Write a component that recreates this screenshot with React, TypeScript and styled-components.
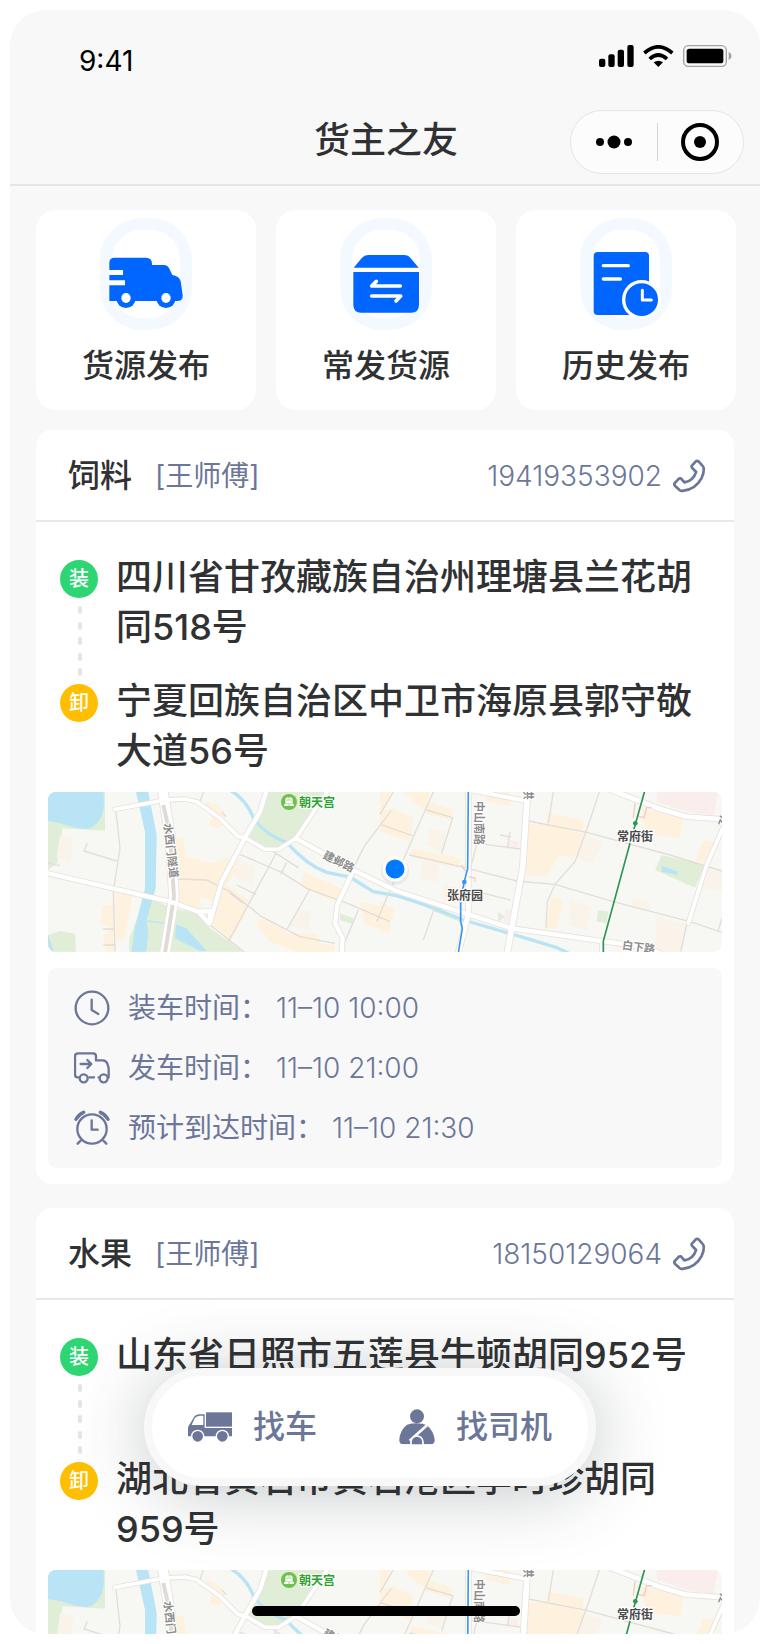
import React from 'react';
import styled, { createGlobalStyle } from 'styled-components';

const color = {
  ink: '#303133',
  muted: '#6c7698',
  page: '#f8f8f8',
  line: '#e8e8e9',
  blue: '#0066ff',
};

const GlobalStyle = createGlobalStyle`
  *, *::before, *::after { box-sizing: border-box; }
  body {
    margin: 0;
    background: #fff;
    color: ${color.ink};
    font-family: Inter, "Noto Sans CJK SC", sans-serif;
  }
  h1, h2, p, ul, ol, dl, dt, dd { margin: 0; padding: 0; list-style: none; }
  button { font-family: inherit; color: inherit; border: 0; background: none; padding: 0; cursor: pointer; }
  a { color: inherit; text-decoration: none; }
  svg { display: block; flex: none; }
`;

const Page = styled.div`
  padding: 10px;
`;

const Phone = styled.div`
  position: relative;
  display: flex;
  flex-direction: column;
  height: calc(100vh - 20px);
  overflow: hidden;
  border-radius: 36px;
  background: ${color.page};
`;

const TopBar = styled.header`
  flex: none;
  border-bottom: 2px solid #e6e6e6;
`;

const StatusBar = styled.div`
  display: flex;
  align-items: center;
  justify-content: space-between;
  height: 90px;
  padding: 12px 28px 0 69px;
  color: #000;
  font-size: 28px;
  line-height: 36px;
`;

const StatusIcons = styled.div`
  display: flex;
  align-items: center;
  gap: 9px;
  padding-bottom: 10px;
`;

const NavBar = styled.div`
  display: grid;
  grid-template-columns: 1fr auto 1fr;
  align-items: center;
  height: 84px;
  padding: 0 16px;
`;

const NavTitle = styled.h1`
  grid-column: 2;
  padding: 0 0 4px 2px;
  font-size: 36px;
  line-height: 50px;
  font-weight: 500;
`;

const Capsule = styled.div`
  justify-self: end;
  display: flex;
  align-items: center;
  width: 174px;
  height: 64px;
  border: 1px solid #e6e6e6;
  border-radius: 32px;
  background: #fcfcfc;
`;

const CapsuleButton = styled.button`
  flex: 1;
  display: flex;
  justify-content: center;
  & + & {
    border-left: 1px solid #d4d4d4;
  }
`;

const Content = styled.main`
  flex: 1;
  min-height: 0;
  overflow-y: auto;
  scrollbar-width: none;
  padding: 24px 26px 0;
`;

const QuickGrid = styled.nav`
  display: grid;
  grid-template-columns: repeat(3, 1fr);
  gap: 20px;
  margin: 0 -2px 20px 0;
`;

const QuickButton = styled.button`
  display: flex;
  flex-direction: column;
  align-items: center;
  gap: 14px;
  height: 200px;
  padding-top: 8px;
  border-radius: 20px;
  background: #fff;
  font-size: 32px;
  line-height: 44px;
  font-weight: 500;
`;

const OrderCard = styled.article`
  margin-bottom: 24px;
  padding-bottom: 16px;
  border-radius: 16px;
  background: #fff;
`;

const OrderHeader = styled.header`
  display: flex;
  align-items: center;
  height: 92px;
  padding: 2px 28px 0 32px;
  border-bottom: 2px solid ${color.line};
`;

const Goods = styled.h2`
  font-size: 32px;
  line-height: 44px;
  font-weight: 500;
`;

const Driver = styled.span`
  margin-left: 23px;
  color: ${color.muted};
  font-size: 28px;
  line-height: 40px;
`;

const PhoneLink = styled.a`
  display: flex;
  align-items: center;
  gap: 10px;
  margin-left: auto;
  color: ${color.muted};
  font-size: 28px;
  line-height: 40px;
  font-weight: 300;
`;

const Route = styled.ol`
  padding: 30px 24px 16px;
`;

const Stop = styled.li`
  display: flex;
  gap: 18px;
  min-height: 100px;
  &:first-child {
    min-height: 124px;
  }
`;

const StopRail = styled.div`
  display: flex;
  flex-direction: column;
  align-items: center;
  width: 38px;
  padding-top: 8px;
`;

const StopBadge = styled.span<{ $tone: string }>`
  flex: none;
  width: 38px;
  height: 38px;
  border-radius: 50%;
  background: ${(p) => p.$tone};
  color: #fff;
  font-size: 20px;
  line-height: 38px;
  font-weight: 500;
  text-align: center;
`;

const Dashes = styled.div`
  flex: 1;
  display: flex;
  flex-direction: column;
  justify-content: space-between;
  padding: 8px 0 0 2px;
`;

const Dash = styled.i`
  width: 4px;
  height: 8px;
  border-radius: 2px;
  background: #e4e5e8;
`;

const Address = styled.p`
  flex: 1;
  font-size: 36px;
  line-height: 50px;
  font-weight: 500;
`;

const MapFrame = styled.div`
  margin: 0 12px 16px;
  height: 160px;
  border-radius: 8px;
  overflow: hidden;
  svg {
    width: 100%;
    height: 100%;
  }
`;

const Times = styled.dl`
  margin: 0 12px;
  padding: 10px 26px;
  border-radius: 8px;
  background: ${color.page};
`;

const TimeRow = styled.div`
  display: flex;
  align-items: center;
  height: 60px;
  color: ${color.muted};
  font-size: 28px;
  line-height: 40px;
  dt {
    margin-left: 18px;
  }
  dd {
    margin-left: 8px;
    font-weight: 300;
  }
`;

const Dock = styled.div`
  position: absolute;
  left: 134px;
  bottom: 148px;
  display: flex;
  align-items: center;
  gap: 82px;
  width: 452px;
  height: 118px;
  padding: 0 36px;
  border: 8px solid ${color.page};
  border-radius: 59px;
  background: #fff;
  box-shadow: 0 6px 72px rgba(44, 54, 56, 0.28);
`;

const DockButton = styled.button`
  display: flex;
  align-items: center;
  gap: 21px;
  color: ${color.muted};
  font-size: 32px;
  line-height: 44px;
  font-weight: 500;
  white-space: nowrap;
`;

const HomeIndicator = styled.div`
  position: absolute;
  left: 50%;
  bottom: 18px;
  width: 268px;
  height: 10px;
  margin-left: -133px;
  border-radius: 5px;
  background: #000;
`;

/* ---------- Icons ---------- */

const SignalIcon = () => (
  <svg width="35" height="22" viewBox="0 0 105 66" aria-hidden="true">
    <rect x="0" y="41" width="19" height="25" rx="6" />
    <rect x="28" y="28" width="19" height="38" rx="6" />
    <rect x="56" y="14" width="19" height="52" rx="6" />
    <rect x="85" y="0" width="19" height="66" rx="6" />
  </svg>
);

const WifiIcon = () => (
  <svg width="31" height="22" viewBox="0 0 93 66" fill="none" stroke="#000" strokeWidth="11" aria-hidden="true">
    <path d="M4 24 Q46 -13 88 24" />
    <path d="M20 42 Q46 18 72 42" />
    <path d="M46 66 L32 52 Q46 42 60 52 Z" fill="#000" stroke="none" />
  </svg>
);

const BatteryIcon = () => (
  <svg width="49" height="22" viewBox="0 0 147 66" aria-hidden="true">
    <rect x="2" y="2" width="128" height="62" rx="14" fill="none" stroke="#a3a3a3" strokeWidth="4" />
    <rect x="11" y="11" width="110" height="44" rx="8" />
    <path d="M137 20 Q146 25 146 33 Q146 41 137 46Z" fill="#a3a3a3" />
  </svg>
);

const MoreIcon = () => (
  <svg width="38" height="14" viewBox="0 0 38 14" aria-hidden="true">
    <circle cx="5" cy="7" r="4" />
    <circle cx="19" cy="7" r="6.5" />
    <circle cx="33" cy="7" r="4" />
  </svg>
);

const TargetIcon = () => (
  <svg width="38" height="38" viewBox="0 0 38 38" aria-hidden="true">
    <circle cx="19" cy="19" r="17" fill="none" stroke="#000" strokeWidth="4" />
    <circle cx="19" cy="19" r="6" />
  </svg>
);

const QuickIcon = ({ children }: { children: React.ReactNode }) => (
  <svg width="92" height="112" viewBox="0 0 276 336" aria-hidden="true">
    <rect x="18" y="18" width="240" height="300" rx="108" fill="none" stroke="#f4f8ff" strokeWidth="36" />
    {children}
  </svg>
);

const PublishIcon = () => (
  <QuickIcon>
    <path
      fill={color.blue}
      d="M28 135 Q28 119 44 119 H138 Q156 119 156 137 V141 H192 Q202 141 207 150 L217 171 Q237 173 242 190 L248 232 Q249 249 234 249 H28Z"
    />
    <circle cx="78" cy="241" r="29" fill={color.blue} />
    <circle cx="198" cy="241" r="29" fill={color.blue} />
    <g fill="#fff">
      <ellipse cx="78" cy="240" rx="14" ry="15" />
      <ellipse cx="198" cy="240" rx="14" ry="15" />
      <path d="M26 156 H69 V171 H26Z M26 187 H75 V202 H26Z" />
    </g>
  </QuickIcon>
);

const FrequentIcon = () => (
  <QuickIcon>
    <rect x="36" y="146" width="204" height="20" fill="#fff" />
    <path fill={color.blue} d="M41 149 L66 119 Q73 111 84 111 H194 Q205 111 211 119 L236 149Z" />
    <path fill={color.blue} d="M40 162 H237 V260 Q237 284 213 284 H64 Q40 284 40 260Z" />
    <g fill="none" stroke="#fff" strokeWidth="11" strokeLinecap="round" strokeLinejoin="round">
      <path d="M109 190 L95 204 H181" />
      <path d="M95 234 H182 L168 249" />
    </g>
  </QuickIcon>
);

const HistoryIcon = () => (
  <QuickIcon>
    <rect x="41" y="102" width="166" height="189" rx="12" fill={color.blue} />
    <circle cx="185" cy="245" r="59" fill="#fff" />
    <circle cx="185" cy="245" r="49" fill={color.blue} />
    <g fill="none" stroke="#fff" strokeWidth="10" strokeLinecap="round" strokeLinejoin="round">
      <path d="M70 143 H145 M70 183 H121" />
      <path strokeWidth="9" d="M187 217 V246 H214" />
    </g>
  </QuickIcon>
);

const HandsetIcon = () => (
  <svg width="34" height="34" viewBox="0 0 100 100" fill="none" stroke="currentColor" strokeWidth="8" strokeLinejoin="round" aria-hidden="true">
    <path d="M70 7 L58 20 Q56 25 63 30 L71 38 Q63 64 37 69 L26 57 Q22 56 19 59 L8 71 Q5 75 10 80 L23 92 Q27 95 34 93 Q70 88 87 56 Q95 40 93 26 Q92 22 88 18 L78 7 Q74 4 70 7Z" />
  </svg>
);

const TimeIcon = ({ children }: { children: React.ReactNode }) => (
  <svg width="36" height="36" viewBox="0 0 108 108" fill="none" stroke="currentColor" strokeWidth="7" strokeLinecap="round" strokeLinejoin="round" aria-hidden="true">
    {children}
  </svg>
);

const ClockIcon = () => (
  <TimeIcon>
    <circle cx="54" cy="54" r="49" />
    <path d="M53 29 V60 L73 72" />
  </TimeIcon>
);

const DepartIcon = () => (
  <TimeIcon>
    <path d="M15 82 H10 Q3 82 3 73 V19 Q3 10 12 10 H57 Q66 10 66 19 V31 H86 Q96 31 100 41 L104 54 V82 H102" />
    <path d="M46 82 H60 M74 82 H78" />
    <circle cx="29" cy="85" r="12" />
    <circle cx="89" cy="85" r="12" />
    <path d="M20 42 H50 M40 30 L52 42 L40 54" />
  </TimeIcon>
);

const AlarmIcon = () => (
  <TimeIcon>
    <circle cx="54" cy="57" r="44" />
    <path d="M53 31 V59 H71" />
    <path d="M20 92 L11 101 M88 92 L97 101" />
    <path strokeWidth="10" d="M6 28 Q14 13 29 7 M79 7 Q94 13 102 28" />
  </TimeIcon>
);

const LorryIcon = () => (
  <svg width="44" height="30" viewBox="0 0 132 90" aria-hidden="true">
    <path fill="currentColor" d="M54 1 H132 V44 H54Z" />
    <path
      fill="currentColor"
      fillRule="evenodd"
      d="M0 73 V48 Q1 41 7 34 L17 17 Q23 7 36 7 H50 V48 H132 V73Z M11 39 H46 V11 H36 Q25 11 20 19Z"
    />
    <g stroke="#fff" strokeWidth="4" fill="currentColor">
      <circle cx="29" cy="73" r="18" />
      <circle cx="103" cy="73" r="18" />
    </g>
  </svg>
);

const DriverIcon = () => (
  <svg width="36" height="36" viewBox="0 0 108 108" fill="currentColor" aria-hidden="true">
    <circle cx="54" cy="22" r="21" />
    <path d="M1 93 Q2 64 24 47 Q38 43 54 43 Q70 43 84 49 Q104 66 107 93 Q107 106 95 106 H13 Q1 106 1 93Z" />
    <g stroke="#fff" fill="none">
      <path strokeWidth="8" d="M84 49 L32 95" />
      <path strokeWidth="5" fill="currentColor" d="M36 110 V99 A18 18 0 0 1 72 99 V110" />
    </g>
    <path fill="#fff" d="M0 106 H108 V108 H0Z" />
  </svg>
);

/* ---------- Map ---------- */

const MapLabel = styled.text<{ $fill?: string }>`
  font-family: "Noto Sans CJK SC", sans-serif;
  font-size: 12px;
  font-weight: 700;
  fill: ${(p) => p.$fill || '#4a4a4a'};
  stroke: #fff;
  stroke-width: 2px;
  paint-order: stroke;
  text-anchor: middle;
`;

const RoadLabel = styled(MapLabel)`
  font-size: 11px;
  fill: #8c8c8c;
`;

const minorRoads = [
  'M228 80 L240 190 L220 320 L225 500',
  'M142 175 L132 198 L230 228',
  'M24 235 L60 242',
  'M410 282 L500 285 L570 320 L665 395 L780 455 L885 475',
  'M600 208 L725 262 L800 310 L930 358 L1050 410',
  'M708 205 L565 470',
  'M508 418 L612 500',
  'M808 315 L740 435',
  'M955 375 L915 470',
  'M740 232 L722 268',
  'M700 200 L775 248',
  'M570 325 L610 355 M590 300 L648 328',
  'M1054 76 L972 185 L940 250',
  'M190 480 H228 M190 432 H225',
  'M490 21 L480 50 M545 80 L558 95',
  'M1180 21 L1140 110 L1048 320 L1010 410',
  'M1020 118 L1118 152 M1060 21 L1020 88',
  'M1160 75 L1238 98 L1205 205',
  'M1108 210 L1250 242 L1430 288 L1545 298 L1720 350 L1950 410 L2046 442',
  'M1275 170 L1440 192 M1310 178 L1290 255',
  'M1465 108 L1640 142 L1890 210 L2046 258',
  'M1525 115 L1540 21',
  'M1678 21 L1645 120 L1605 230 L1545 298 L1522 350 L1518 430',
  'M1290 315 L1412 345 M1410 140 L1402 190 M1380 150 L1412 156',
  'M1190 350 L1150 465',
  'M1940 420 L1922 500 M2046 400 L2034 438',
];

const majorRoads = [
  { d: 'M24 265 L390 350 L475 380 L508 416 M475 380 L512 378 L508 416', w: 13 },
  { d: 'M225 73 L375 45 L435 42 L470 50 L540 100 L595 155 L615 158 L675 193 L715 193 L768 160 L865 15', w: 11 },
  { d: 'M682 10 L660 80 L615 158 L545 290 L510 412', w: 13 },
  { d: 'M768 160 L940 255 L1070 318 L1285 388 L1415 430 L1685 468 L1780 482 L1860 504', w: 13 },
  { d: 'M940 255 L892 360 L885 415 L908 460 L905 504', w: 13 },
  { d: 'M1285 15 V388 L1255 504', w: 15 },
  { d: 'M1290 15 L1460 48', w: 12 },
  { d: 'M1461 45 L1448 250 L1415 430 L1402 504', w: 17 },
  { d: 'M1700 10 L1860 72 L1940 95 L2050 103', w: 14 },
  { d: 'M2050 125 L2000 240 L1945 415', w: 11 },
  { d: 'M1684 468 V504', w: 8 },
];

const blocks =
  'M500 50 L530 60 L558 90 L540 130 L508 122 L515 85 L498 70Z ' +
  'M408 155 L430 160 L440 215 L520 235 L560 220 L600 240 L560 300 L625 345 L610 400 L570 470 L510 410 L520 350 L480 335 L485 372 L415 350 L420 280 L405 230Z ' +
  'M225 322 L278 330 L270 380 L250 470 L228 460Z M190 360 L225 360 V500 H195 L190 450 L215 430 L178 415Z ' +
  'M795 262 L905 310 L895 350 L855 340 L780 300Z M660 400 L720 420 L740 445 L830 445 L845 475 L885 480 V500 H770 L690 470 L650 420Z ' +
  'M960 350 L1050 370 V440 L975 420Z M1020 21 H1060 L1020 85Z ' +
  'M1020 78 L1060 70 L1120 100 L1110 170 L1020 140Z M1095 21 H1170 L1160 75 L1130 60Z ' +
  'M1165 50 L1240 75 L1230 105 L1155 85Z M1115 190 L1260 220 L1255 250 L1110 215Z ' +
  'M1330 21 H1410 V65 L1340 50Z M1465 115 L1540 120 L1640 150 L1600 220 L1560 210 L1520 275 L1440 270 L1450 180Z ' +
  'M1520 85 L1630 105 V140 L1520 115Z M1535 335 L1570 345 L1550 430 L1515 430Z ' +
  'M1020 350 L1065 370 L1045 440 H1020Z M1800 70 L1930 95 L1920 160 L1820 150Z M1990 165 L2030 175 L2000 235 L1965 230Z M1210 300 L1265 310 V355 L1215 350Z';

const paleBlocks =
  'M60 150 L100 160 L90 230 L50 220Z M590 220 L645 245 L640 300 L585 280Z M765 370 L815 380 L805 435 L755 425Z ' +
  'M1145 220 L1200 235 L1190 290 L1140 280Z M1630 150 L1690 170 L1660 235 L1610 220Z M1590 345 L1655 365 L1640 435 L1585 420Z ' +
  'M1850 395 L1940 420 L1920 500 H1845Z M1990 250 L2046 262 V318 L1980 310Z M1170 130 L1220 140 L1210 200 L1160 180Z M1780 340 L1830 350 V375 L1775 360Z';

const RouteMap = () => (
  <svg viewBox="0 0 674 160" preserveAspectRatio="xMidYMid slice" role="img" aria-label="地图">
    <rect width="674" height="160" fill="#f7f8f3" />
    <g transform="translate(-8 -7) scale(0.33333)" fill="none">
      <path fill="#e0eed8" d="M24 21 H195 V137 L68 130 L52 235 L24 255Z M24 450 L60 437 L107 447 V500 H24Z M340 345 L400 370 L470 385 L510 430 L612 500 H268 V460 L300 380Z M680 21 H865 L765 165 L715 192 H680 L622 158Z" />
      <path fill="#e0eed8" d="M1865 210 L1995 240 L1965 308 L1845 255Z M1675 375 L1705 380 L1700 415 L1670 410Z M1375 380 L1395 395 L1375 410Z M1185 362 L1265 400 L1262 412 L1180 378Z M900 385 L940 400 L940 418 L900 405Z M545 405 L558 402 L540 430Z" />
      <path fill="#fef2df" d={blocks} />
      <path fill="#f9f3ea" d={paleBlocks} />
      <path fill="#faeeec" d="M1850 21 H2035 L2020 92 L1940 80 L1850 50Z M1410 165 L1436 170 L1432 190 L1402 186Z M1395 372 L1412 376 L1405 412 L1390 410Z" />
      <path fill="#b9e4f5" d="M24 21 H190 C196 70 188 112 150 130 C110 138 75 112 24 108Z M24 450 L42 500 H24Z M288 21 H325 L350 150 L347 310 L320 405 L325 445 L318 500 H275 L285 425 L315 310 V140Z M408 418 L440 430 L500 498 H480 L405 460Z M1865 243 L1915 260 L1912 270 L1865 260Z" />
      <path stroke="#b9e4f5" strokeWidth="4" d="M322 408 L378 415" />
      <path stroke="#b9e4f5" strokeWidth="10" d="M570 15 Q620 45 640 98 Q672 148 740 172 Q800 240 860 262 L930 276 L1000 320 L1070 332 L1150 358 L1270 405 L1440 454 L1550 488 L1585 504" />
      <g stroke="#e3ddd8" strokeWidth="4">
        {minorRoads.map((d) => (
          <path key={d} d={d} />
        ))}
      </g>
      <path stroke="#e6e2de" strokeWidth="34" d="M368 15 L390 150 L402 335 L375 504" />
      {majorRoads.map((r) => (
        <path key={r.d} d={r.d} stroke="#e6e2de" strokeWidth={r.w + 5} strokeLinecap="round" strokeLinejoin="round" />
      ))}
      <path stroke="#fff" strokeWidth="29" d="M368 15 L390 150 L402 335 L375 504" />
      <path stroke="#dedad6" strokeWidth="12" d="M370 60 L390 150 L402 335 L375 504" />
      {majorRoads.map((r) => (
        <path key={r.d} d={r.d} stroke="#fff" strokeWidth={r.w} strokeLinecap="round" strokeLinejoin="round" />
      ))}
      <path stroke="#f7c9bd" strokeWidth="4" d="M1785 55 L1780 98 M1835 68 H1820 L1812 98 L1795 94 M1265 240 L1275 258 M1285 275 L1305 280 V290" />
      <path stroke="#3d94f6" strokeWidth="5" d="M1285 15 L1283 250 L1273 290 L1262 345 V410 L1267 430 L1255 504" />
      <circle cx="1273" cy="291" r="7" fill="#3d94f6" />
      <path stroke="#2f9557" strokeWidth="5" d="M1815 15 L1770 175 L1690 468 V504" />
      <circle cx="1786" cy="115" r="7" fill="#2f9557" />
      <path stroke="#8c8c8c" strokeWidth="4" d="M2040 92 L2046 98 M2036 118 L2041 104 L2046 112" />
    </g>
    <circle cx="241" cy="10" r="8" fill="#70c04e" />
    <path d="M238 14 V8 Q238 6 240 6 V14 M244 14 V8 Q244 6 242 6 V14 M236 13 H240 M242 13 H246 M238 10 H244" fill="none" stroke="#fff" strokeWidth="1.3" />
    <MapLabel x="269" y="15" $fill="#2fa32f">朝天宫</MapLabel>
    <MapLabel x="417" y="108">张府园</MapLabel>
    <MapLabel x="587" y="49">常府街</MapLabel>
    <RoadLabel transform="translate(119 59) rotate(83)">水西门隧道</RoadLabel>
    <RoadLabel transform="translate(289 73) rotate(26)">建邺路</RoadLabel>
    <RoadLabel transform="translate(427 31) rotate(90)">中山南路</RoadLabel>
    <RoadLabel transform="translate(476 2) rotate(90)">洪</RoadLabel>
    <RoadLabel transform="translate(590 159) rotate(8)">白下路</RoadLabel>
    <circle cx="347" cy="79" r="14" fill="#000" opacity="0.05" />
    <circle cx="347" cy="77" r="12.5" fill="#fff" />
    <circle cx="347" cy="77" r="9.5" fill="#007aff" />
  </svg>
);

/* ---------- Data ---------- */

const quickActions = [
  { label: '货源发布', Icon: PublishIcon },
  { label: '常发货源', Icon: FrequentIcon },
  { label: '历史发布', Icon: HistoryIcon },
];

const times = [
  { label: '装车时间：', value: '11–10 10:00', Icon: ClockIcon },
  { label: '发车时间：', value: '11–10 21:00', Icon: DepartIcon },
  { label: '预计到达时间：', value: '11–10 21:30', Icon: AlarmIcon },
];

const orders = [
  {
    goods: '饲料',
    driver: '王师傅',
    phone: '19419353902',
    from: '四川省甘孜藏族自治州理塘县兰花胡同518号',
    to: '宁夏回族自治区中卫市海原县郭守敬大道56号',
  },
  {
    goods: '水果',
    driver: '王师傅',
    phone: '18150129064',
    from: '山东省日照市五莲县牛顿胡同952号',
    to: '湖北省黄石市黄石港区李时珍胡同959号',
  },
];

const Order = ({ order }: { order: (typeof orders)[number] }) => (
  <OrderCard>
    <OrderHeader>
      <Goods>{order.goods}</Goods>
      <Driver>[{order.driver}]</Driver>
      <PhoneLink href={`tel:${order.phone}`}>
        {order.phone}
        <HandsetIcon />
      </PhoneLink>
    </OrderHeader>
    <Route>
      <Stop>
        <StopRail>
          <StopBadge $tone="#2ed573">装</StopBadge>
          <Dashes aria-hidden="true">
            <Dash />
            <Dash />
            <Dash />
            <Dash />
            <Dash />
          </Dashes>
        </StopRail>
        <Address>{order.from}</Address>
      </Stop>
      <Stop>
        <StopRail>
          <StopBadge $tone="#ffbf00">卸</StopBadge>
        </StopRail>
        <Address>{order.to}</Address>
      </Stop>
    </Route>
    <MapFrame>
      <RouteMap />
    </MapFrame>
    <Times>
      {times.map(({ label, value, Icon }) => (
        <TimeRow key={label}>
          <Icon />
          <dt>{label}</dt>
          <dd>{value}</dd>
        </TimeRow>
      ))}
    </Times>
  </OrderCard>
);

export default function App() {
  return (
    <Page>
      <GlobalStyle />
      <Phone>
        <TopBar>
          <StatusBar>
            <time>9:41</time>
            <StatusIcons>
              <SignalIcon />
              <WifiIcon />
              <BatteryIcon />
            </StatusIcons>
          </StatusBar>
          <NavBar>
            <NavTitle>货主之友</NavTitle>
            <Capsule>
              <CapsuleButton type="button" aria-label="更多">
                <MoreIcon />
              </CapsuleButton>
              <CapsuleButton type="button" aria-label="关闭">
                <TargetIcon />
              </CapsuleButton>
            </Capsule>
          </NavBar>
        </TopBar>
        <Content>
          <QuickGrid>
            {quickActions.map(({ label, Icon }) => (
              <QuickButton key={label} type="button">
                <Icon />
                {label}
              </QuickButton>
            ))}
          </QuickGrid>
          {orders.map((order) => (
            <Order key={order.phone} order={order} />
          ))}
        </Content>
        <Dock>
          <DockButton type="button">
            <LorryIcon />
            找车
          </DockButton>
          <DockButton type="button">
            <DriverIcon />
            找司机
          </DockButton>
        </Dock>
        <HomeIndicator />
      </Phone>
    </Page>
  );
}
